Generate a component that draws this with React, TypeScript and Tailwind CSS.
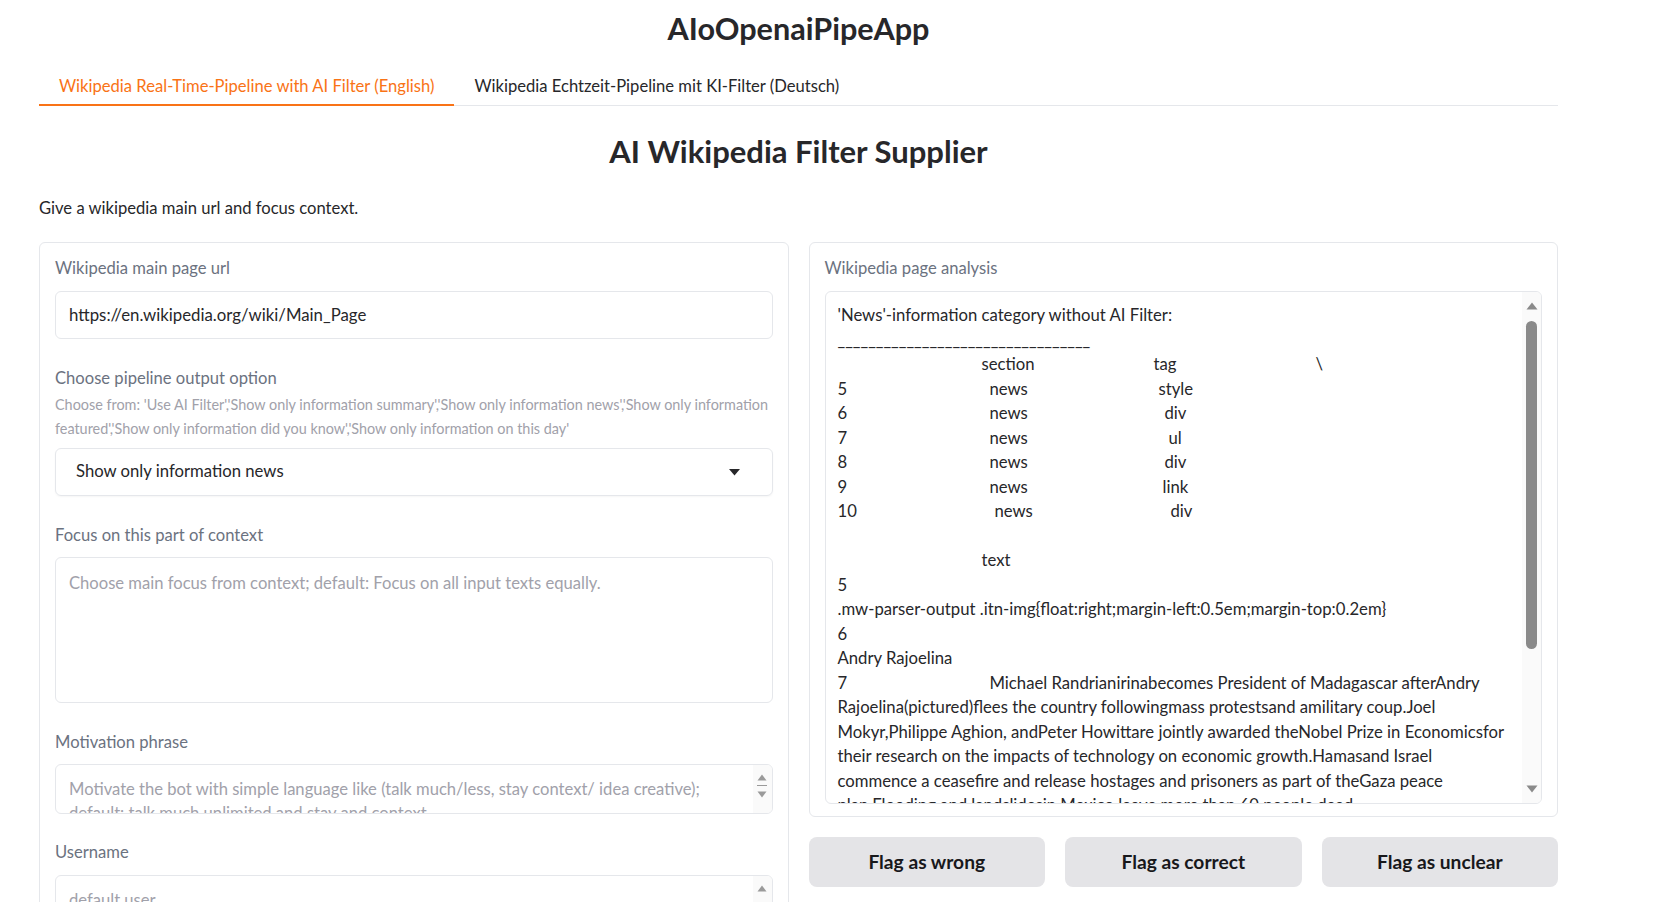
import React from "react";

function UpTri({ className }: { className?: string }) {
  return (
    <svg className={className} width="10" height="7" viewBox="0 0 10 7">
      <path d="M5 0.5 L9.5 6.5 L0.5 6.5 Z" fill="currentColor" />
    </svg>
  );
}
function DownTri({ className }: { className?: string }) {
  return (
    <svg className={className} width="10" height="7" viewBox="0 0 10 7">
      <path d="M0.5 0.5 L9.5 0.5 L5 6.5 Z" fill="currentColor" />
    </svg>
  );
}

function Label({ children }: { children: React.ReactNode }) {
  return <div className="text-[16.6px] leading-[20px] text-[#6b7280]">{children}</div>;
}

export default function App() {
  return (
    <div className="h-[902px] w-full overflow-hidden bg-white font-['Lato',sans-serif] text-[#27272a]">
      <div className="ml-[39px] w-[1519px]">
        <h1 className="pt-[10px] text-center text-[30.6px] font-bold leading-[38px] text-[#27272a]">
          AIoOpenaiPipeApp
        </h1>

        <div className="mt-[16px] flex border-b border-[#e5e7eb]">
          <div className="-mb-px border-b-2 border-[#f97316] px-[20px] pt-[12px] pb-[8px] text-[16.6px] leading-[20px] text-[#f97316]">
            Wikipedia Real-Time-Pipeline with AI Filter (English)
          </div>
          <div className="px-[20px] pt-[12px] pb-[8px] text-[16.6px] leading-[20px] text-[#27272a]">
            Wikipedia Echtzeit-Pipeline mit KI-Filter (Deutsch)
          </div>
        </div>

        <h2 className="mt-[25px] text-center text-[31px] font-bold leading-[40px] text-[#27272a]">
          AI Wikipedia Filter Supplier
        </h2>

        <p className="mt-[25px] text-[16.6px] leading-[24px]">Give a wikipedia main url and focus context.</p>

        <div className="mt-[22px] grid grid-cols-2 gap-[20px]">
          {/* Left panel */}
          <div className="rounded-md border border-[#e5e7eb] px-[15px] pt-[15px] pb-6">
            <Label>Wikipedia main page url</Label>
            <div className="mt-[13px] flex h-[48px] items-center rounded-md border border-[#e5e7eb] px-[13px] text-[16.8px]">
              https://en.wikipedia.org/wiki/Main_Page
            </div>

            <div className="mt-[29px]">
              <Label>Choose pipeline output option</Label>
            </div>
            <div className="mt-[5px] text-[14.4px] leading-[24px] text-[#a1a1aa]">
              <div className="whitespace-nowrap">
                Choose from: 'Use AI Filter','Show only information summary','Show only information news','Show only information
              </div>
              <div className="whitespace-nowrap">
                featured','Show only information did you know','Show only information on this day'
              </div>
            </div>
            <div className="mt-[7px] flex h-[48px] items-center justify-between rounded-md border border-[#e5e7eb] pl-[20px] pr-[32px] text-[16.7px] shadow-[0_1px_2px_rgba(0,0,0,0.04)]">
              <span>Show only information news</span>
              <svg width="11" height="7" viewBox="0 0 11 7">
                <path d="M0 0 L11 0 L5.5 6.5 Z" fill="#27272a" />
              </svg>
            </div>

            <div className="mt-[29px]">
              <Label>Focus on this part of context</Label>
            </div>
            <div className="mt-[12px] h-[146px] rounded-md border border-[#e5e7eb] px-[13px] pt-[13px] text-[16.6px] leading-[24px] text-[#a1a1aa]">
              Choose main focus from context; default: Focus on all input texts equally.
            </div>

            <div className="mt-[29px]">
              <Label>Motivation phrase</Label>
            </div>
            <div className="relative mt-[12px] h-[50px] overflow-hidden rounded-md border border-[#e5e7eb] pl-[13px] pr-[24px] pt-[12px] text-[16.6px] leading-[24px] text-[#a1a1aa]">
              <div className="whitespace-nowrap">
                Motivate the bot with simple language like (talk much/less, stay context/ idea creative);
              </div>
              <div className="whitespace-nowrap">default: talk much unlimited and stay and context</div>
              <div className="absolute right-0 top-0 flex h-full w-[19px] flex-col items-center bg-[#fafafa] pt-[9px] text-[#9a9a9a]">
                <UpTri />
                <div className="mt-[4px] h-px w-[10px] bg-[#9a9a9a]" />
                <DownTri className="mt-[5px]" />
              </div>
            </div>

            <div className="mt-[28px]">
              <Label>Username</Label>
            </div>
            <div className="relative mt-[13px] h-[50px] overflow-hidden rounded-md border border-[#e5e7eb] pl-[13px] pr-[24px] pt-[12px] text-[16.6px] leading-[24px] text-[#a1a1aa]">
              default user
              <div className="absolute right-0 top-0 flex h-full w-[19px] flex-col items-center bg-[#fafafa] pt-[9px] text-[#9a9a9a]">
                <UpTri />
              </div>
            </div>
          </div>

          {/* Right column */}
          <div>
            <div className="rounded-md border border-[#e5e7eb] px-[15px] pt-[15px] pb-[12px]">
              <Label>Wikipedia page analysis</Label>
              <div className="relative mt-[13px] h-[513px] overflow-hidden rounded-md border border-[#e5e7eb] pl-[12px] pr-[24px] pt-[11px] text-[16.7px] leading-[24.5px] text-[#27272a]">
                <div className="whitespace-nowrap">'News'-information category without AI Filter:</div>
                <div className="whitespace-nowrap">_________________________________</div>
                <div className="whitespace-nowrap">
                  <span className="inline-block w-[144px]"></span>
                  <span className="inline-block w-[172px]">section</span>
                  <span className="inline-block w-[162px]">tag</span>
                  <span>\</span>
                </div>
                <div className="whitespace-nowrap">
                  <span className="inline-block w-[152px]">5</span>
                  <span className="inline-block w-[169px]">news</span>
                  <span>style</span>
                </div>
                <div className="whitespace-nowrap">
                  <span className="inline-block w-[152px]">6</span>
                  <span className="inline-block w-[175px]">news</span>
                  <span>div</span>
                </div>
                <div className="whitespace-nowrap">
                  <span className="inline-block w-[152px]">7</span>
                  <span className="inline-block w-[179px]">news</span>
                  <span>ul</span>
                </div>
                <div className="whitespace-nowrap">
                  <span className="inline-block w-[152px]">8</span>
                  <span className="inline-block w-[175px]">news</span>
                  <span>div</span>
                </div>
                <div className="whitespace-nowrap">
                  <span className="inline-block w-[152px]">9</span>
                  <span className="inline-block w-[173px]">news</span>
                  <span>link</span>
                </div>
                <div className="whitespace-nowrap">
                  <span className="inline-block w-[157px]">10</span>
                  <span className="inline-block w-[176px]">news</span>
                  <span>div</span>
                </div>
                <div className="h-[24.5px]" />
                <div className="whitespace-nowrap">
                  <span className="inline-block w-[144px]"></span>
                  <span>text</span>
                </div>
                <div>5</div>
                <div className="whitespace-nowrap">.mw-parser-output .itn-img{"{"}float:right;margin-left:0.5em;margin-top:0.2em{"}"}</div>
                <div>6</div>
                <div>Andry Rajoelina</div>
                <div className="whitespace-nowrap">
                  <span className="inline-block w-[152px]">7</span>
                  <span>Michael Randrianirinabecomes President of Madagascar afterAndry</span>
                </div>
                <div className="whitespace-nowrap">Rajoelina(pictured)flees the country followingmass protestsand amilitary coup.Joel</div>
                <div className="whitespace-nowrap">Mokyr,Philippe Aghion, andPeter Howittare jointly awarded theNobel Prize in Economicsfor</div>
                <div className="whitespace-nowrap">their research on the impacts of technology on economic growth.Hamasand Israel</div>
                <div className="whitespace-nowrap">commence a ceasefire and release hostages and prisoners as part of theGaza peace</div>
                <div className="whitespace-nowrap">plan.Flooding and landslidesin Mexico leave more than 60 people dead.</div>

                <div className="absolute right-0 top-0 flex h-full w-[19px] flex-col items-center bg-[#fafafa] text-[#8a8a8a]">
                  <svg className="mt-[10px]" width="12" height="8" viewBox="0 0 12 8">
                    <path d="M6 0.5 L11.5 7.5 L0.5 7.5 Z" fill="currentColor" />
                  </svg>
                  <div className="mt-[11px] h-[328px] w-[11px] rounded-full bg-[#8a8a8a]" />
                  <div className="flex-1" />
                  <svg className="mb-[10px]" width="12" height="8" viewBox="0 0 12 8">
                    <path d="M0.5 0.5 L11.5 0.5 L6 7.5 Z" fill="currentColor" />
                  </svg>
                </div>
              </div>
            </div>

            <div className="mt-[20px] grid grid-cols-3 gap-[20px]">
              <button className="h-[50px] rounded-lg bg-[#e4e4e7] text-[19.2px] font-bold text-[#18181b]">Flag as wrong</button>
              <button className="h-[50px] rounded-lg bg-[#e4e4e7] text-[19.2px] font-bold text-[#18181b]">Flag as correct</button>
              <button className="h-[50px] rounded-lg bg-[#e4e4e7] text-[19.2px] font-bold text-[#18181b]">Flag as unclear</button>
            </div>
          </div>
        </div>
      </div>
    </div>
  );
}
